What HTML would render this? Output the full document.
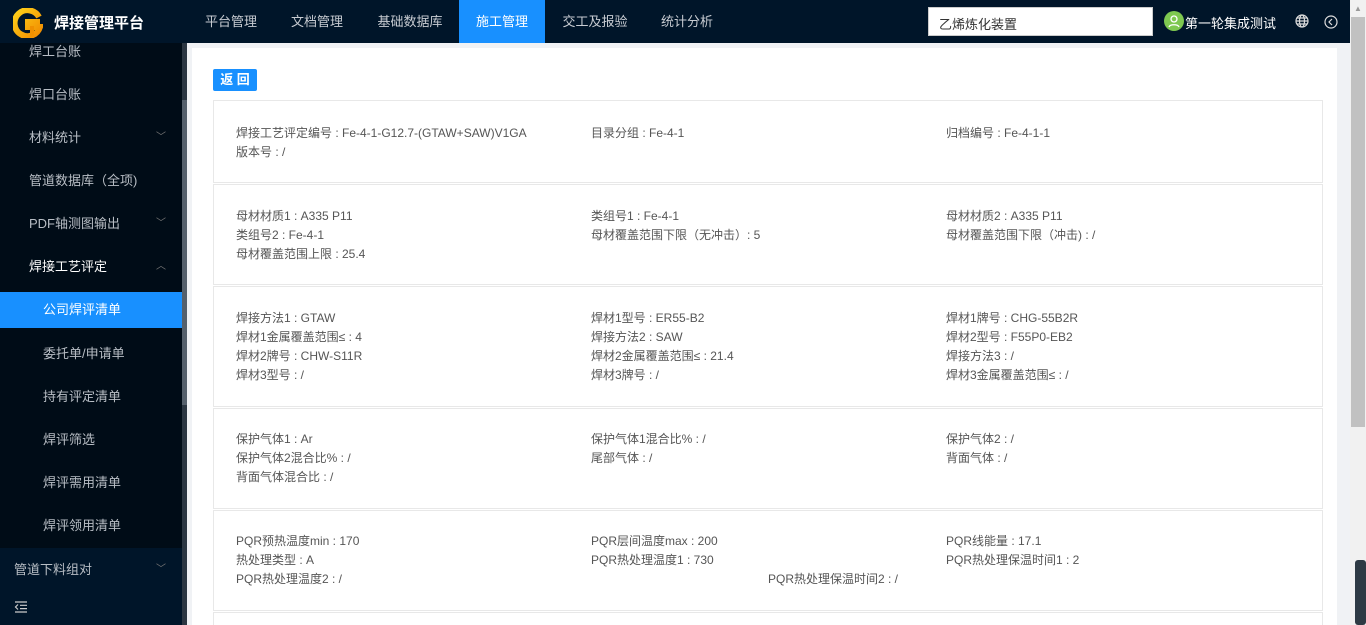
<!DOCTYPE html>
<html style="overflow:hidden;height:625px"><head><meta charset="utf-8"><style>
*{margin:0;padding:0;box-sizing:border-box}
body{width:1366px;height:625px;overflow:hidden;font-family:"Liberation Sans","Noto Sans CJK SC",sans-serif;background:#f0f2f5;position:relative;font-size:12px;color:#555}
.hdr{position:absolute;left:0;top:0;width:1350px;height:43px;background:#001529}
.logo{position:absolute;left:13px;top:8px;width:30px;height:30px}
.title{position:absolute;left:54px;top:12px;color:#fff;font-size:15px;font-weight:bold}
.nav{position:absolute;top:0;height:43px;line-height:43px;color:#c8ccd2;font-size:13px;text-align:center}
.nav.act{background:#1890ff;color:#fff}
.search{position:absolute;left:928px;top:7px;width:225px;height:29px;background:#fff;border:1px solid #ccc;font-size:13px;color:#333;padding:6px 10px}
.side{position:absolute;left:0;top:43px;width:182px;height:582px;background:#000c17;overflow:hidden}
.si{position:absolute;left:0;width:182px;height:43px;line-height:43px;font-size:13px;color:#b8bec5}
.chev{position:absolute;right:16px;top:0;color:#777;font-size:10px}
.sb{position:absolute;left:182px;top:43px;width:5px;height:582px;background:#2b3642}
.panel{position:absolute;left:192px;top:48px;width:1145px;height:577px;background:#fff}
.card{position:absolute;left:213px;width:1110px;border:1px solid #e8e8e8;background:#fff}
.t{position:absolute;font-size:12px;color:#555;white-space:nowrap;line-height:19px}
.vs{position:absolute;left:1350px;top:0;width:16px;height:625px;background:#f1f1f1}
</style></head><body>
<div class="hdr">
<svg class="logo" viewBox="0 0 30 30"><defs><linearGradient id="g" x1="0" y1="0" x2="1" y2="1"><stop offset="0" stop-color="#ffd21a"/><stop offset="1" stop-color="#f08a00"/></linearGradient></defs><path d="M26 9A13 13 0 1 0 27 19H15V14h12" fill="none" stroke="url(#g)" stroke-width="6"/><path d="M19 18v11" stroke="#f09000" stroke-width="4"/></svg>
<div class="title">焊接管理平台</div>
<div class="nav" style="left:190px;width:82px">平台管理</div>
<div class="nav" style="left:276px;width:82px">文档管理</div>
<div class="nav" style="left:362px;width:96px">基础数据库</div>
<div class="nav act" style="left:459px;width:86px">施工管理</div>
<div class="nav" style="left:549px;width:92px">交工及报验</div>
<div class="nav" style="left:645px;width:84px">统计分析</div>
<div class="search">乙烯炼化装置</div>
<div style="position:absolute;left:1164px;top:11px;width:20px;height:20px;border-radius:50%;background:#7ec850"><svg viewBox="0 0 20 20" width="20" height="20"><circle cx="10" cy="8" r="3" fill="none" stroke="#fff" stroke-width="1.3"/><path d="M5 16c1-3 9-3 10 0" fill="none" stroke="#fff" stroke-width="1.3"/></svg></div>
<div style="position:absolute;left:1185px;top:13px;color:#fff;font-size:13px">第一轮集成测试</div>
<svg style="position:absolute;left:1295px;top:14px" width="14" height="14" viewBox="0 0 14 14" fill="none" stroke="#ddd" stroke-width="1.2"><circle cx="7" cy="7" r="6"/><ellipse cx="7" cy="7" rx="2.5" ry="6"/><path d="M1 7h12M2 4h10M2 10h10"/></svg>
<svg style="position:absolute;left:1324px;top:15px" width="14" height="14" viewBox="0 0 14 14" fill="none" stroke="#ddd" stroke-width="1.2"><circle cx="7" cy="7" r="6"/><path d="M8 4L5 7l3 3"/></svg>
</div>
<div class="side">
<div class="si" style="top:-13px;padding-left:29px">焊工台账</div>
<div class="si" style="top:30px;padding-left:29px">焊口台账</div>
<div class="si" style="top:73px;padding-left:29px">材料统计<span class="chev">﹀</span></div>
<div class="si" style="top:116px;padding-left:29px">管道数据库（全项)</div>
<div class="si" style="top:159px;padding-left:29px">PDF轴测图输出<span class="chev">﹀</span></div>
<div class="si" style="top:202px;padding-left:29px;color:#fff">焊接工艺评定<span class="chev">︿</span></div>
<div class="si" style="top:249px;height:36px;line-height:36px;padding-left:43px;color:#fff;background:#1890ff">公司焊评清单</div>
<div class="si" style="top:289px;padding-left:43px">委托单/申请单</div>
<div class="si" style="top:332px;padding-left:43px">持有评定清单</div>
<div class="si" style="top:375px;padding-left:43px">焊评筛选</div>
<div class="si" style="top:418px;padding-left:43px">焊评需用清单</div>
<div class="si" style="top:461px;padding-left:43px">焊评领用清单</div>
<div class="si" style="top:505px;padding-left:14px;background:#001529">管道下料组对<span class="chev">﹀</span></div>
<div class="si" style="top:548px;height:34px;background:#001529"><svg style="position:absolute;left:14px;top:10px" width="14" height="12" viewBox="0 0 14 12" stroke="#ccc" stroke-width="1.2" fill="none"><path d="M1 1h12M6 4.3h7M6 7.6h7M1 11h12M4 3.5L1.5 6 4 8.5"/></svg></div>
</div>
<div class="sb"><div style="position:absolute;top:57px;width:5px;height:305px;background:#55606c"></div></div>
<div class="panel"></div>
<div style="position:absolute;left:213px;top:69px;width:44px;height:22px;background:#1890ff;color:#fff;font-size:13px;font-weight:bold;text-align:center;line-height:22px;border-radius:2px">返 回</div>

<div class="card" style="top:100px;height:83px"></div>
<div class="card" style="top:184px;height:101px"></div>
<div class="card" style="top:286px;height:121px"></div>
<div class="card" style="top:408px;height:101px"></div>
<div class="card" style="top:510px;height:101px"></div>
<div class="card" style="top:612px;height:13px;border-bottom:none"></div>

<div class="t" style="left:236px;top:124px">焊接工艺评定编号 : Fe-4-1-G12.7-(GTAW+SAW)V1GA<br>版本号 : /</div>
<div class="t" style="left:591px;top:124px">目录分组 : Fe-4-1</div>
<div class="t" style="left:946px;top:124px">归档编号 : Fe-4-1-1</div>

<div class="t" style="left:236px;top:207px">母材材质1 : A335 P11<br>类组号2 : Fe-4-1<br>母材覆盖范围上限 : 25.4</div>
<div class="t" style="left:591px;top:207px">类组号1 : Fe-4-1<br>母材覆盖范围下限（无冲击）: 5</div>
<div class="t" style="left:946px;top:207px">母材材质2 : A335 P11<br>母材覆盖范围下限（冲击) : /</div>

<div class="t" style="left:236px;top:309px">焊接方法1 : GTAW<br>焊材1金属覆盖范围≤ : 4<br>焊材2牌号 : CHW-S11R<br>焊材3型号 : /</div>
<div class="t" style="left:591px;top:309px">焊材1型号 : ER55-B2<br>焊接方法2 : SAW<br>焊材2金属覆盖范围≤ : 21.4<br>焊材3牌号 : /</div>
<div class="t" style="left:946px;top:309px">焊材1牌号 : CHG-55B2R<br>焊材2型号 : F55P0-EB2<br>焊接方法3 : /<br>焊材3金属覆盖范围≤ : /</div>

<div class="t" style="left:236px;top:430px">保护气体1 : Ar<br>保护气体2混合比% : /<br>背面气体混合比 : /</div>
<div class="t" style="left:591px;top:430px">保护气体1混合比% : /<br>尾部气体 : /</div>
<div class="t" style="left:946px;top:430px">保护气体2 : /<br>背面气体 : /</div>

<div class="t" style="left:236px;top:532px">PQR预热温度min : 170<br>热处理类型 : A<br>PQR热处理温度2 : /</div>
<div class="t" style="left:591px;top:532px">PQR层间温度max : 200<br>PQR热处理温度1 : 730</div>
<div class="t" style="left:768px;top:570px">PQR热处理保温时间2 : /</div>
<div class="t" style="left:946px;top:532px">PQR线能量 : 17.1<br>PQR热处理保温时间1 : 2</div>

<div class="vs"><div style="position:absolute;left:1px;top:17px;width:14px;height:410px;background:#c1c1c1"></div></div>
<div style="position:absolute;left:1354px;top:4px;color:#999;font-size:8px">▲</div>
<div style="position:absolute;left:1355px;top:560px;width:11px;height:65px;background:#2e3a44;border-radius:3px"></div>
</body></html>
